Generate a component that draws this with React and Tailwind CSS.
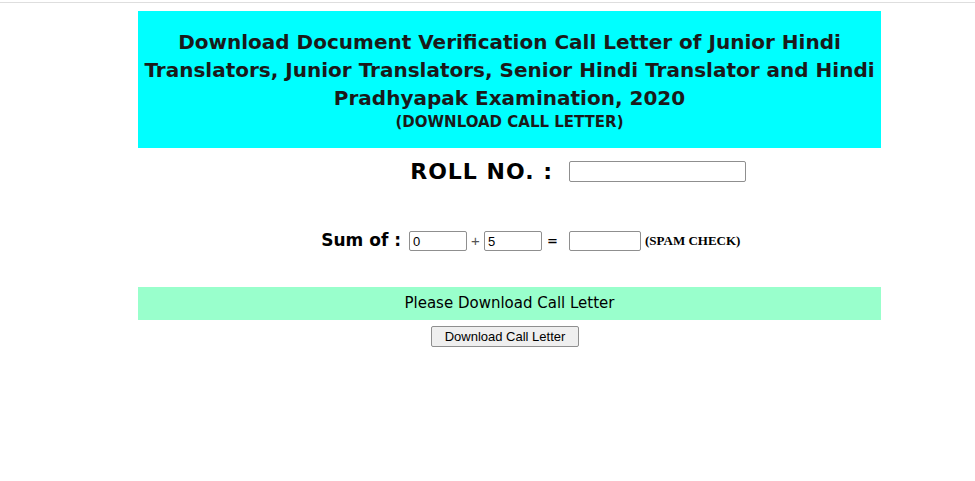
export default function App() {
    return (
        <div className="min-h-[481px] bg-white text-black">
            <div className="h-[2px]" />
            <div className="h-px bg-[#dedede]" />

            <div className="ml-[138px] mt-[8px] w-[743px]">
                <div className="bg-[#00ffff] pt-[17px] pb-[16px] text-center font-['DejaVu_Sans',sans-serif]">
                    <h1 className="text-[20px] font-bold leading-[28px] text-[#1a1a1a]">
                        Download Document Verification Call Letter of Junior Hindi
                        <br />
                        Translators, Junior Translators, Senior Hindi Translator and Hindi
                        <br />
                        Pradhyapak Examination, 2020
                    </h1>
                    <div className="text-[15px] font-bold leading-[20px] text-[#1a1a1a]">(DOWNLOAD CALL LETTER)</div>
                </div>

                <div className="flex items-center h-[46px] font-['DejaVu_Sans',sans-serif]">
                    <div className="w-[431px] pr-[16px] text-right text-[22px] font-bold tracking-[1px]">ROLL NO. :</div>
                    <input type="text" className="w-[177px] h-[21px] border border-[#8f8f8f] rounded-[2px] px-1 text-[13px]" />
                </div>

                <div className="flex items-center h-[44px] mt-[25px] font-['DejaVu_Sans',sans-serif] text-[13px]">
                    <div className="w-[271px] pr-[8px] text-right text-[17px] font-bold">Sum of :</div>
                    <input type="text" defaultValue="0" className="w-[58px] h-[20px] border border-[#8f8f8f] rounded-[2px] px-[3px] text-[13px] font-['Liberation_Sans',sans-serif]" />
                    <span className="w-[17px] text-center text-[15px] text-[#555] font-['Liberation_Sans',sans-serif]">+</span>
                    <input type="text" defaultValue="5" className="w-[58px] h-[20px] border border-[#8f8f8f] rounded-[2px] px-[3px] text-[13px] font-['Liberation_Sans',sans-serif]" />
                    <span className="w-[27px] pl-[5px] font-bold">=</span>
                    <input type="text" className="w-[72px] h-[20px] border border-[#8f8f8f] rounded-[2px] px-[3px] text-[13px]" />
                    <span className="ml-[4px] text-[13px] font-bold font-['Liberation_Serif',serif]">(SPAM CHECK)</span>
                </div>

                <div className="mt-[24px] h-[33px] bg-[#99ffcc] flex items-center justify-center font-['DejaVu_Sans',sans-serif] text-[15px]">
                    Please Download Call Letter
                </div>

                <div className="flex justify-center mt-[6px] pr-[9px]">
                    <button className="h-[21px] w-[148px] border border-[#8f8f8f] rounded-[2px] bg-[#efefef] text-[13px] font-['Liberation_Sans',sans-serif] text-black">
                        Download Call Letter
                    </button>
                </div>
            </div>
        </div>
    );
}
